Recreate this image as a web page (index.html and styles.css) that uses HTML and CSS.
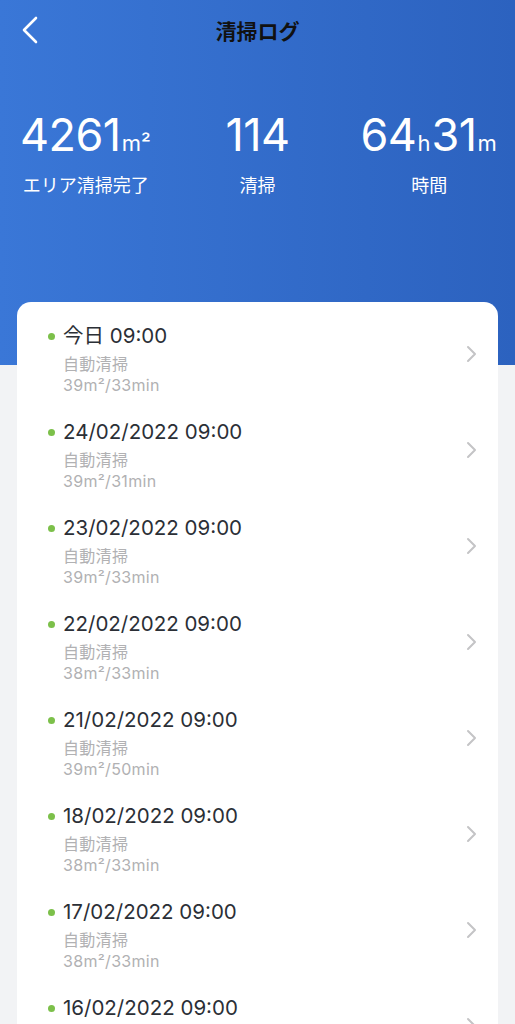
FILE: index.html
```html
<html>
<head>
  <title>清掃ログ</title>
  <link rel="stylesheet" href="styles.css">
</head>
<body>

  <div class="hero">
    <div class="nav">
      <span class="back">
        <svg width="18" height="30" viewBox="0 0 18 30"><path d="M15 3 L3 15 L15 27" fill="none" stroke="#fff" stroke-width="2.6" stroke-linecap="round" stroke-linejoin="round"/></svg>
      </span>
      <h1>清掃ログ</h1>
    </div>

    <div class="stats">
      <div class="stat">
        <div class="num">4261<span class="unit">m²</span></div>
        <div class="label">エリア清掃完了</div>
      </div>
      <div class="stat">
        <div class="num">114</div>
        <div class="label">清掃</div>
      </div>
      <div class="stat">
        <div class="num">64<span class="unit">h</span>31<span class="unit">m</span></div>
        <div class="label">時間</div>
      </div>
    </div>
  </div>

  <div class="card" id="logList"></div>

  <script>
    const logs = [
      ['今日 09:00', '39m²/33min'],
      ['24/02/2022 09:00', '39m²/31min'],
      ['23/02/2022 09:00', '39m²/33min'],
      ['22/02/2022 09:00', '38m²/33min'],
      ['21/02/2022 09:00', '39m²/50min'],
      ['18/02/2022 09:00', '38m²/33min'],
      ['17/02/2022 09:00', '38m²/33min'],
      ['16/02/2022 09:00', '38m²/33min']
    ];

    const list = document.getElementById('logList');
    for (const [when, detail] of logs) {
      list.insertAdjacentHTML('beforeend', `
        <div class="log-item">
          <div class="log-text">
            <div class="log-date"><span class="dot"></span>${when}</div>
            <div class="log-sub">自動清掃</div>
            <div class="log-sub">${detail}</div>
          </div>
          <svg class="arrow" width="12" height="18" viewBox="0 0 12 18"><path d="M2 2 L9 9 L2 16" fill="none" stroke="#c4c4c6" stroke-width="2" stroke-linecap="round" stroke-linejoin="round"/></svg>
        </div>`);
    }
  </script>

</body>
</html>
```

FILE: styles.css
```css
body {
  font-family: 'Inter', 'Noto Sans CJK JP', sans-serif;
  margin: 0;
  padding: 0;
  background: #f2f3f5;
  overflow: hidden;
}

.hero {
  background: linear-gradient(90deg, #3a77d7, #2c62bf);
  padding-bottom: 166px;
  color: #fff;
}

.nav {
  height: 60px;
  display: flex;
  align-items: center;
  justify-content: center;
  position: relative;
}

.back {
  position: absolute;
  left: 21px;
  top: 15px;
}

.nav h1 {
  margin: 0;
  font-size: 21px;
  font-weight: bold;
  color: #111;
}

.stats {
  display: grid;
  grid-template-columns: 1fr 1fr 1fr;
  padding-top: 49px;
  text-align: center;
}

.num {
  font-size: 45px;
  font-weight: 400;
  height: 52px;
  line-height: 52px;
  letter-spacing: -0.5px;
}

.unit {
  font-size: 22px;
  line-height: 0;
  letter-spacing: 0;
  margin: 0 1px;
}

.label {
  font-size: 18px;
  line-height: 26px;
  margin-top: 12px;
}

.card {
  background: #fff;
  margin: -63px 17px 0 17px;
  border-radius: 14px;
  padding-top: 10px;
  min-height: 900px;
}

.log-item {
  display: flex;
  align-items: flex-start;
  justify-content: space-between;
  padding: 12px 20px 12px 30px;
}

.log-date {
  position: relative;
  font-size: 20.5px;
  line-height: 24px;
  color: #2b2f36;
  padding-left: 16px;
  margin-bottom: 6px;
}

.dot {
  position: absolute;
  left: 1px;
  top: 9px;
  width: 7px;
  height: 7px;
  border-radius: 50%;
  background: #7cc04a;
}

.log-sub {
  font-size: 16px;
  line-height: 21px;
  letter-spacing: 0.3px;
  color: #b1b1b3;
  padding-left: 16px;
}

.arrow {
  margin-top: 21px;
}
```
